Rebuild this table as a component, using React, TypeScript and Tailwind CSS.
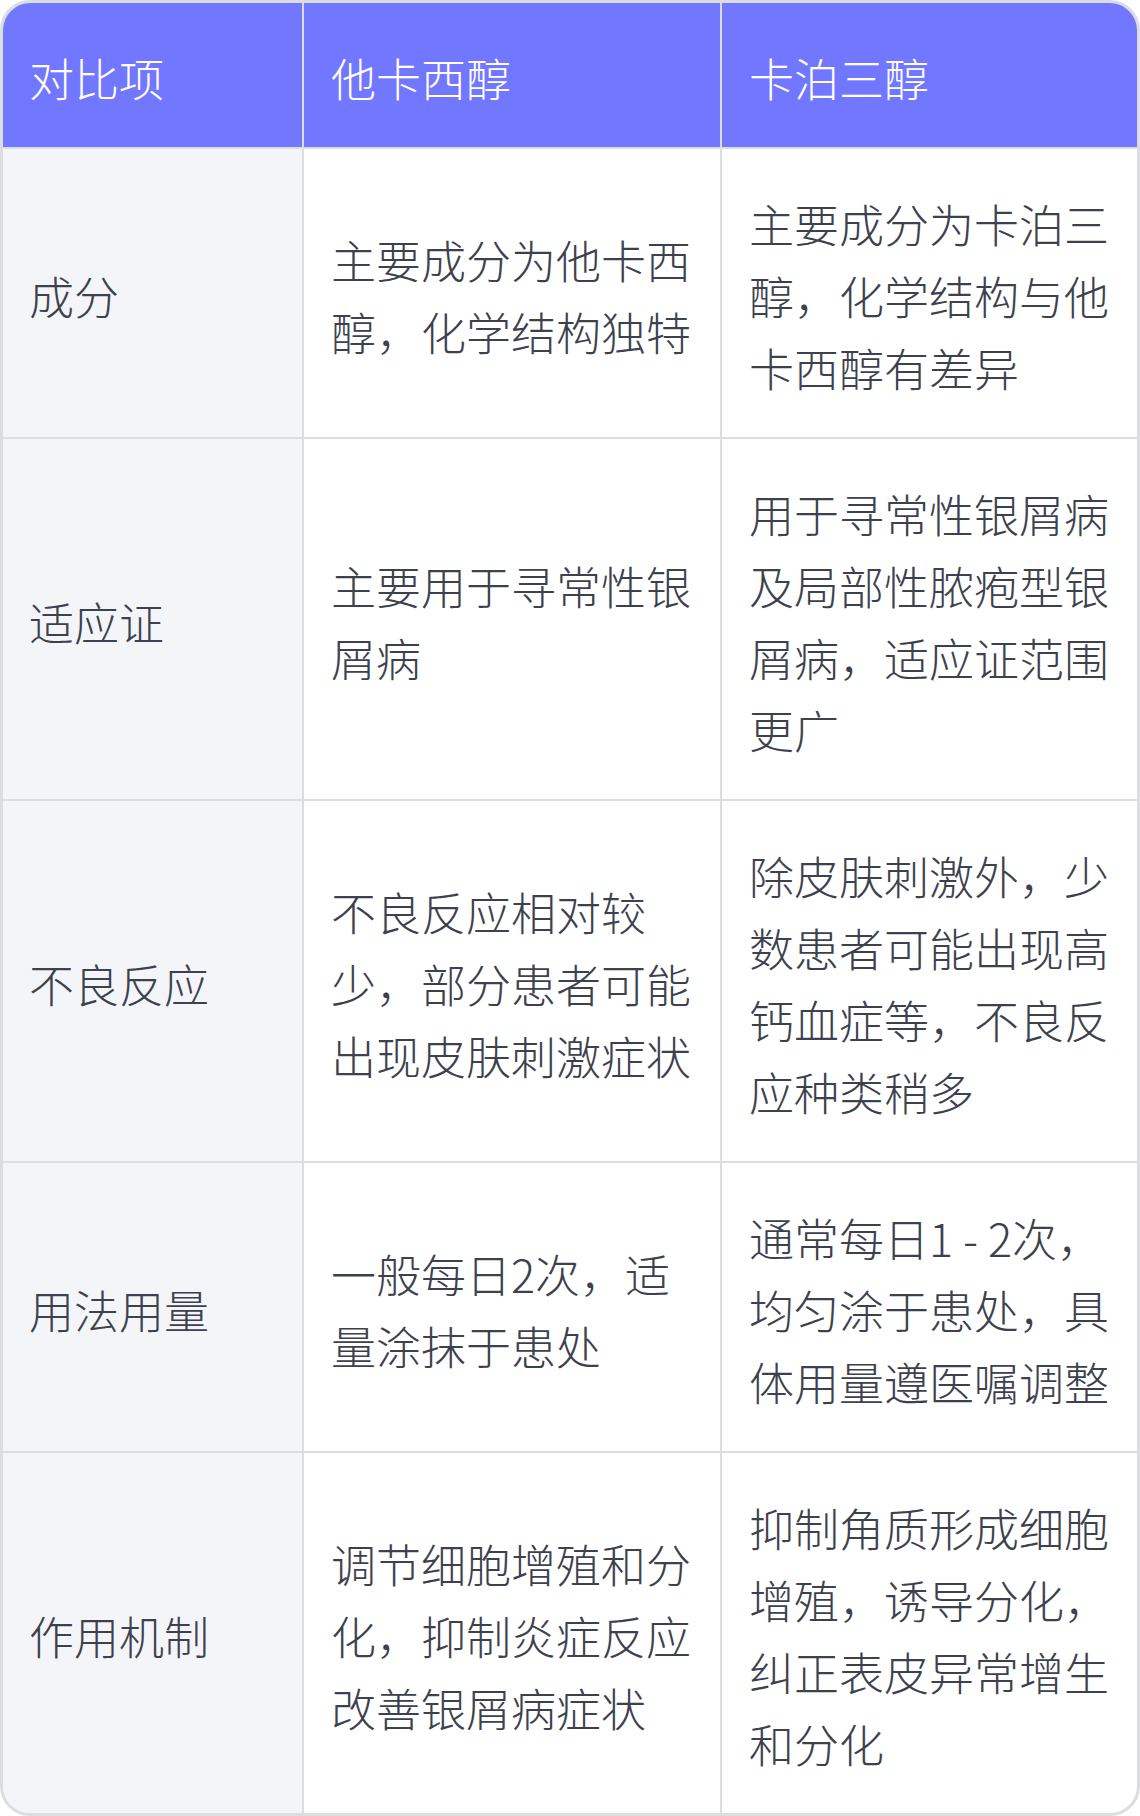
import React from "react";

const rows: { label: string; a: string[]; b: string[] }[] = [
  {
    label: "成分",
    a: ["主要成分为他卡西", "醇，化学结构独特"],
    b: ["主要成分为卡泊三", "醇，化学结构与他", "卡西醇有差异"],
  },
  {
    label: "适应证",
    a: ["主要用于寻常性银", "屑病"],
    b: ["用于寻常性银屑病", "及局部性脓疱型银", "屑病，适应证范围", "更广"],
  },
  {
    label: "不良反应",
    a: ["不良反应相对较", "少，部分患者可能", "出现皮肤刺激症状"],
    b: ["除皮肤刺激外，少", "数患者可能出现高", "钙血症等，不良反", "应种类稍多"],
  },
  {
    label: "用法用量",
    a: ["一般每日2次，适", "量涂抹于患处"],
    b: ["通常每日1 - 2次，", "均匀涂于患处，具", "体用量遵医嘱调整"],
  },
  {
    label: "作用机制",
    a: ["调节细胞增殖和分", "化，抑制炎症反应", "改善银屑病症状"],
    b: ["抑制角质形成细胞", "增殖，诱导分化，", "纠正表皮异常增生", "和分化"],
  },
];

function Lines({ lines }: { lines: string[] }) {
  return (
    <div>
      {lines.map((l, i) => (
        <div key={i} className="whitespace-nowrap">
          {l}
        </div>
      ))}
    </div>
  );
}

export default function App() {
  return (
    <div
      className="w-[1140px] bg-white text-[45px] leading-[72px] font-extralight text-[#3d414d]"
      style={{
        fontFamily:
          '"Noto Sans CJK SC Light", "Noto Sans CJK SC DemiLight", "Noto Sans CJK SC", "Noto Sans", sans-serif',
      }}
    >
      <div className="border-[3px] border-[#dcdde1] rounded-[30px] overflow-hidden">
        <div className="grid grid-cols-[299px_418px_1fr] bg-[#7177ff] text-white">
          <div className="pt-[39px] pb-[33px] pl-[26px]">对比项</div>
          <div className="border-l-2 border-[#dcdde1] pt-[39px] pb-[33px] pl-[27px]">他卡西醇</div>
          <div className="border-l-2 border-[#dcdde1] pt-[39px] pb-[33px] pl-[27px]">卡泊三醇</div>
        </div>
        {rows.map((r, i) => (
          <div key={i} className="grid grid-cols-[299px_418px_1fr] border-t-2 border-[#dcdde1]">
            <div className="bg-[#f4f5f9] flex items-center pt-[39px] pb-[33px] pl-[26px]">{r.label}</div>
            <div className="border-l-2 border-[#dcdde1] flex items-center pt-[39px] pb-[33px] pl-[27px]">
              <Lines lines={r.a} />
            </div>
            <div className="border-l-2 border-[#dcdde1] flex items-center pt-[39px] pb-[33px] pl-[27px]">
              <Lines lines={r.b} />
            </div>
          </div>
        ))}
      </div>
    </div>
  );
}
